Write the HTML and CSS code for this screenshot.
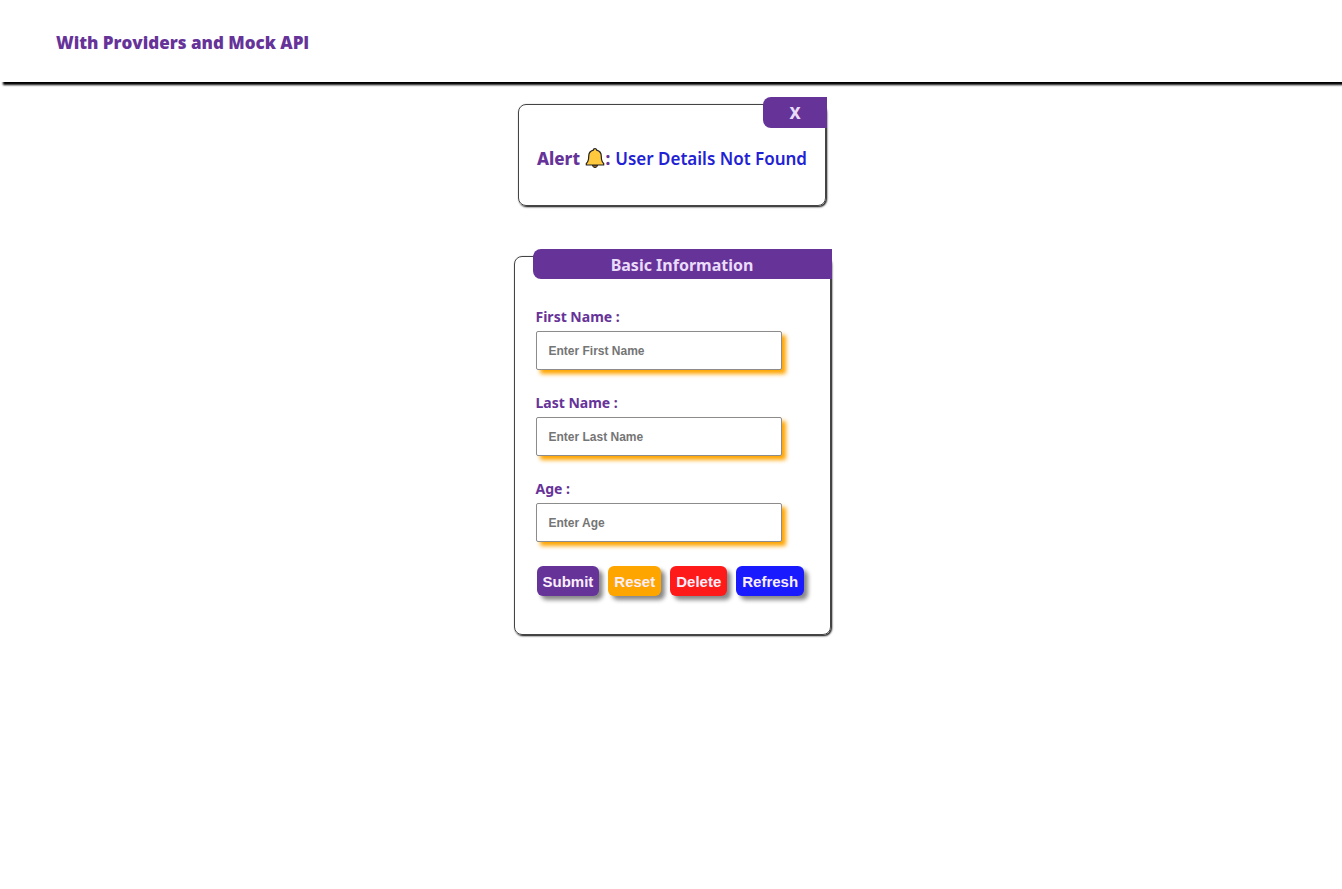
FILE: index.html
```html
<!DOCTYPE html>
<html lang="en">
<head>
<meta charset="utf-8">
<meta name="viewport" content="width=device-width, initial-scale=1">
<title>With Providers and Mock API</title>
<link rel="stylesheet" href="styles.css">
</head>
<body>
<header class="top"><h1 class="brand">With Providers and Mock API</h1></header>
<main class="content">
  <section class="card alert" role="alert">
    <button class="tab close" type="button" aria-label="Close">X</button>
    <p class="message">
      <span class="label">Alert <svg class="bell" viewBox="0 0 20 20" aria-hidden="true"><path d="M7.500 17H12.500C12.500 18.500 11.500 19.500 10 19.500S7.500 18.500 7.500 17Z" fill="#a5641c" stroke="#222" stroke-width="1"/><path d="M10 .7C8.900 .7 8.300 1.400 8.300 2.200C5.200 3 3.700 5.500 3.700 8.500C3.700 12.500 3 14 1.300 15.500V17H18.700V15.500C17 14 16.300 12.500 16.300 8.500C16.300 5.500 14.800 3 11.700 2.200C11.700 1.400 11.100 .7 10 .7Z" fill="#ffc83d" stroke="#222" stroke-width="1.200" stroke-linejoin="round"/></svg>:</span>
      <span class="detail">User Details Not Found</span>
    </p>
  </section>
  <form class="card form">
    <h2 class="tab title">Basic Information</h2>
    <div class="field"><label for="first">First Name :</label><input id="first" type="text" placeholder="Enter First Name"></div>
    <div class="field"><label for="last">Last Name :</label><input id="last" type="text" placeholder="Enter Last Name"></div>
    <div class="field"><label for="age">Age :</label><input id="age" type="text" placeholder="Enter Age"></div>
    <div class="actions">
      <button class="btn submit" type="button">Submit</button>
      <button class="btn reset" type="button">Reset</button>
      <button class="btn delete" type="button">Delete</button>
      <button class="btn refresh" type="button">Refresh</button>
    </div>
  </form>
</main>
</body>
</html>
```

FILE: styles.css
```css
* { box-sizing: border-box; }
body {
  margin: 0;
  background: #fff;
  color: rebeccapurple;
  font-family: "Segoe UI", "Noto Sans", sans-serif;
}
.top {
  padding: 31px 56px 27px;
  box-shadow: 3px 3px 2px #000;
}
.brand { margin: 0; font: 800 17px/24px "Open Sans", sans-serif; }
.content {
  display: flex;
  flex-direction: column;
  align-items: center;
  gap: 50px;
  padding: 22px 0 40px 2px;
}
.card {
  display: flex;
  flex-direction: column;
  border: 1px solid #444;
  border-radius: 8px;
  box-shadow: 1px 1px 2px #000;
}
.tab {
  align-self: flex-end;
  margin: -8px -2px 0 0;
  border: 0;
  border-radius: 8px 0 0 8px;
  background: rebeccapurple;
  color: #eadcf8;
  font-family: inherit;
  font-size: 16px;
  font-weight: 700;
  text-align: center;
}
.alert { padding-bottom: 33px; }
.close { width: 64px; height: 31px; padding: 0; font-weight: 800; }
.message {
  display: flex;
  align-items: center;
  gap: 5px;
  margin: 18px 18px 0;
  font-size: 17px;
  line-height: 26px;
  white-space: nowrap;
}
.label { font-weight: 800; }
.detail { color: #2222d4; font-weight: 600; }
.bell { width: 20px; height: 20px; margin-left: 1px; vertical-align: -3px; }
.form { width: 317px; padding: 0 18px 38px 21px; }
.title { align-self: stretch; margin: -8px -20px 28px -3px; padding-top: 2px; line-height: 28px; }
.field { display: flex; flex-direction: column; margin-bottom: 23px; }
.field label { font-size: 14px; font-weight: 700; line-height: 20px; margin-bottom: 4px; }
.field input {
  width: 246px;
  height: 39px;
  padding: 0 12px;
  border: 1px solid #8c8c8c;
  border-radius: 2px;
  background: #fff;
  box-shadow: 4px 4px 4px orange;
  font: 700 12px "Liberation Sans", Arial, sans-serif;
}
.field input::placeholder { color: #757575; opacity: 1; }
.actions { display: flex; gap: 9px; padding: 1px 0 0 1px; }
.btn {
  height: 30px;
  padding: 0 6px;
  border: 0;
  border-radius: 6px;
  box-shadow: 4px 4px 4px #888;
  color: #fbeefb;
  font: 700 15px "Liberation Sans", Arial, sans-serif;
}
.submit { background: rebeccapurple; }
.reset { background: orange; }
.delete { background: #ff1a1a; }
.refresh { background: #1a1aff; }
```
